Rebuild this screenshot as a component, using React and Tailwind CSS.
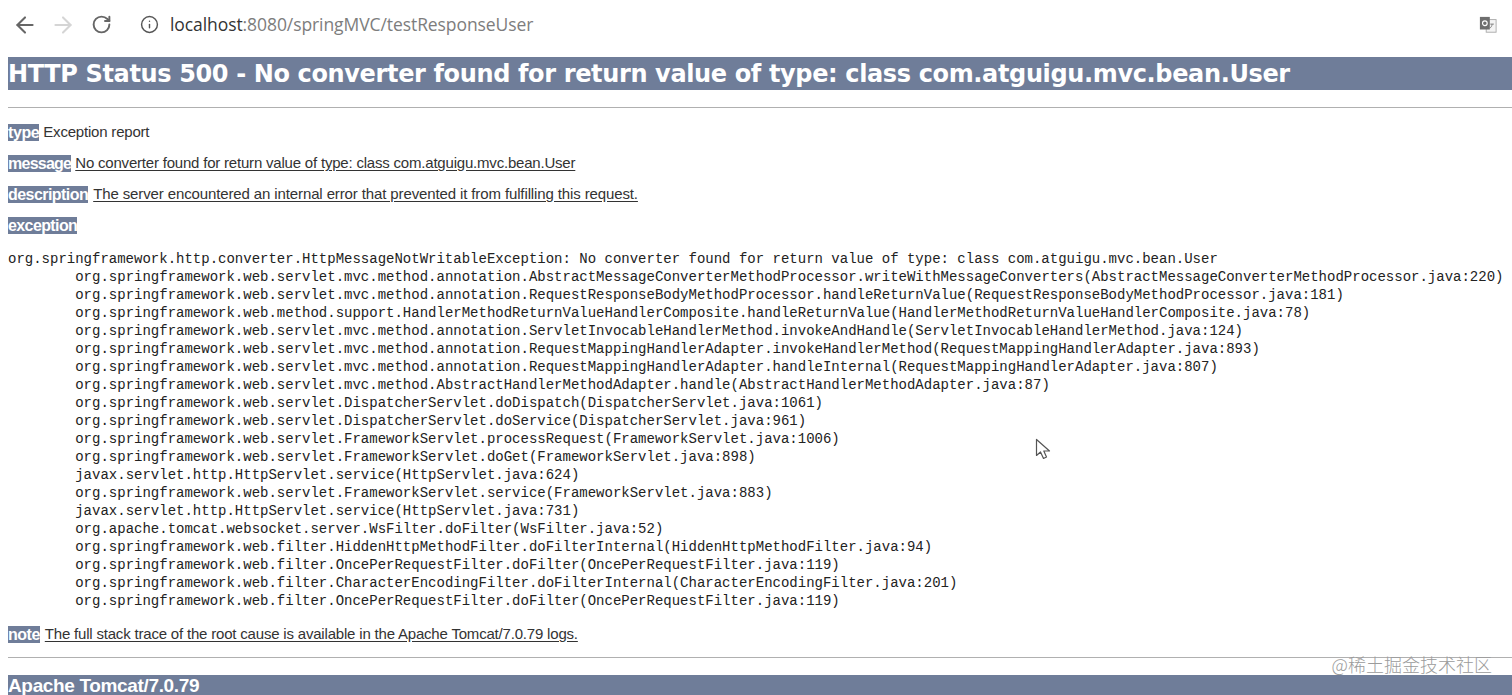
import React from "react";
import { ArrowLeft, ArrowRight, RotateCw, Info } from "lucide-react";

const stack = [
  "org.springframework.http.converter.HttpMessageNotWritableException: No converter found for return value of type: class com.atguigu.mvc.bean.User",
  "\torg.springframework.web.servlet.mvc.method.annotation.AbstractMessageConverterMethodProcessor.writeWithMessageConverters(AbstractMessageConverterMethodProcessor.java:220)",
  "\torg.springframework.web.servlet.mvc.method.annotation.RequestResponseBodyMethodProcessor.handleReturnValue(RequestResponseBodyMethodProcessor.java:181)",
  "\torg.springframework.web.method.support.HandlerMethodReturnValueHandlerComposite.handleReturnValue(HandlerMethodReturnValueHandlerComposite.java:78)",
  "\torg.springframework.web.servlet.mvc.method.annotation.ServletInvocableHandlerMethod.invokeAndHandle(ServletInvocableHandlerMethod.java:124)",
  "\torg.springframework.web.servlet.mvc.method.annotation.RequestMappingHandlerAdapter.invokeHandlerMethod(RequestMappingHandlerAdapter.java:893)",
  "\torg.springframework.web.servlet.mvc.method.annotation.RequestMappingHandlerAdapter.handleInternal(RequestMappingHandlerAdapter.java:807)",
  "\torg.springframework.web.servlet.mvc.method.AbstractHandlerMethodAdapter.handle(AbstractHandlerMethodAdapter.java:87)",
  "\torg.springframework.web.servlet.DispatcherServlet.doDispatch(DispatcherServlet.java:1061)",
  "\torg.springframework.web.servlet.DispatcherServlet.doService(DispatcherServlet.java:961)",
  "\torg.springframework.web.servlet.FrameworkServlet.processRequest(FrameworkServlet.java:1006)",
  "\torg.springframework.web.servlet.FrameworkServlet.doGet(FrameworkServlet.java:898)",
  "\tjavax.servlet.http.HttpServlet.service(HttpServlet.java:624)",
  "\torg.springframework.web.servlet.FrameworkServlet.service(FrameworkServlet.java:883)",
  "\tjavax.servlet.http.HttpServlet.service(HttpServlet.java:731)",
  "\torg.apache.tomcat.websocket.server.WsFilter.doFilter(WsFilter.java:52)",
  "\torg.springframework.web.filter.HiddenHttpMethodFilter.doFilterInternal(HiddenHttpMethodFilter.java:94)",
  "\torg.springframework.web.filter.OncePerRequestFilter.doFilter(OncePerRequestFilter.java:119)",
  "\torg.springframework.web.filter.CharacterEncodingFilter.doFilterInternal(CharacterEncodingFilter.java:201)",
  "\torg.springframework.web.filter.OncePerRequestFilter.doFilter(OncePerRequestFilter.java:119)",
];

function Label({ children, className }) {
  return (
    <b className={"bg-[#6f7d99] text-white font-bold text-[16px] leading-[17px] inline-block " + className}>
      {children}
    </b>
  );
}

function Row({ label, text, labelClass, textClass }) {
  return (
    <p className="h-[31px] flex items-center gap-[4px] text-[15px] text-[#333333] font-['Liberation_Sans',sans-serif] whitespace-pre">
      <Label className={labelClass}>{label}</Label>
      <span className={textClass}>{text}</span>
    </p>
  );
}

export default function App() {
  return (
    <div className="relative h-[695px] overflow-hidden bg-white font-['Liberation_Sans',sans-serif]">
      <header className="h-[57px] flex items-center pb-[8px] pl-[12px] pr-[15px]">
        <ArrowLeft size={26} strokeWidth={1.9} className="text-[#666666]" />
        <ArrowRight size={26} strokeWidth={1.9} className="text-[#d5d5d5] ml-[12px]" />
        <RotateCw size={21} strokeWidth={2.2} className="text-[#666666] ml-[14.5px]" />
        <Info size={19} strokeWidth={1.8} className="text-[#555555] ml-[28.5px]" />
        <div className="ml-[11px] text-[17.5px] text-[#7d7d7d] font-['Open_Sans',sans-serif] tracking-[-0.08px]">
          <span className="text-[#333333]">localhost</span>:8080/springMVC/testResponseUser
        </div>
        <svg viewBox="0 0 20 20" className="w-[18px] h-[18px] ml-auto" aria-hidden="true">
          <rect x="8" y="4" width="11" height="14" fill="#f4f4f4" stroke="#a8a8a8" />
          <rect x="1" y="1" width="11" height="14" fill="#6e6e6e" />
          <circle cx="6.5" cy="8" r="2.6" fill="none" stroke="#ffffff" strokeWidth="1.3" />
          <path d="M12.5 9h4M14.5 9c0 2-1 3.5-2.5 4.5" fill="none" stroke="#777777" />
        </svg>
      </header>

      <div className="pl-[8px]">
        <h1 className="h-[33px] bg-[#6f7d99] text-white text-[24px] font-bold leading-[35px] whitespace-pre font-['DejaVu_Sans',sans-serif] tracking-[-0.36px]">
          HTTP Status 500 - No converter found for return value of type: class com.atguigu.mvc.bean.User
        </h1>
        <hr className="mt-[17px] mb-[9px] border-0 border-t border-[#b0b0b0]" />
        <Row label="type" labelClass="tracking-[-0.4px]" text="Exception report" textClass="tracking-[-0.2px]" />
        <Row label="message" labelClass="tracking-[-0.75px]" text="No converter found for return value of type: class com.atguigu.mvc.bean.User" textClass="underline underline-offset-2 tracking-[-0.2px]" />
        <Row label="description" labelClass="tracking-[-0.55px]" text="The server encountered an internal error that prevented it from fulfilling this request." textClass="underline underline-offset-2 tracking-[-0.12px] ml-[1px]" />
        <Row label="exception" labelClass="tracking-[-0.6px]" text="" textClass="" />
        <pre className="mt-[9px] font-['Liberation_Mono',monospace] text-[14px] leading-[18px] text-[#222222] whitespace-pre [tab-size:8]">
          {stack.join("\n")}
        </pre>
        <div className="mt-[9px]">
          <Row label="note" labelClass="tracking-[-0.5px]" text="The full stack trace of the root cause is available in the Apache Tomcat/7.0.79 logs." textClass="underline underline-offset-2 tracking-[-0.19px] ml-[1px]" />
        </div>
        <hr className="mt-[7px] border-0 border-t border-[#b0b0b0]" />
        <h3 className="mt-[17px] h-[20px] bg-[#6f7d99] text-white text-[19px] font-bold leading-[21px] tracking-[-0.35px] whitespace-pre">
          Apache Tomcat/7.0.79
        </h3>
      </div>

      <div className="absolute right-[20px] top-[653px] text-[18px] leading-[22px] text-[#9b9b9b] font-light font-['Noto_Sans_CJK_SC',sans-serif] whitespace-pre">
        @稀土掘金技术社区
      </div>

      <svg viewBox="0 0 16 24" className="absolute left-[1035px] top-[438px] w-[16px] h-[24px]" aria-hidden="true">
        <path d="M1.5 1.5V17.5L5.5 14L8.5 20.5L11.5 19L8.8 13H14.5Z" fill="#ffffff" stroke="#555555" strokeWidth="1.2" strokeLinejoin="round" />
      </svg>
    </div>
  );
}
